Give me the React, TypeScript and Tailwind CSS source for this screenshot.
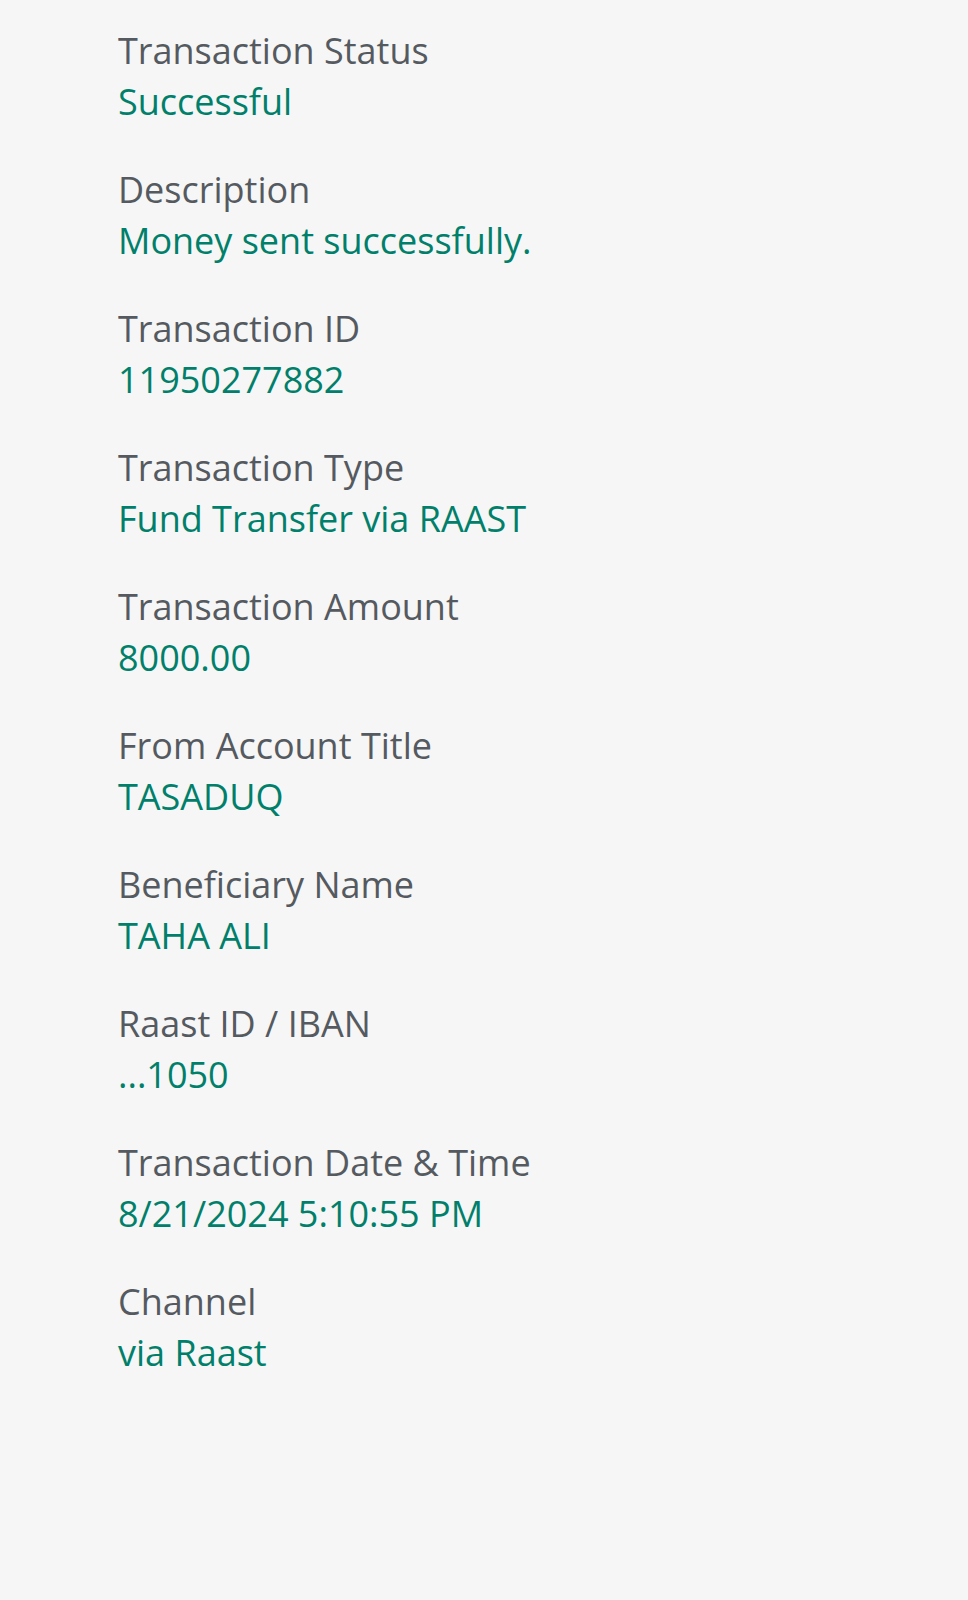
import React from 'react';

const rows: { label: string; value: string }[] = [
  { label: 'Transaction Status', value: 'Successful' },
  { label: 'Description', value: 'Money sent successfully.' },
  { label: 'Transaction ID', value: '11950277882' },
  { label: 'Transaction Type', value: 'Fund Transfer via RAAST' },
  { label: 'Transaction Amount', value: '8000.00' },
  { label: 'From Account Title', value: 'TASADUQ' },
  { label: 'Beneficiary Name', value: 'TAHA ALI' },
  { label: 'Raast ID / IBAN', value: '...1050' },
  { label: 'Transaction Date & Time', value: '8/21/2024 5:10:55 PM' },
  { label: 'Channel', value: 'via Raast' },
];

const App: React.FC = () => {
  return (
    <div
      className="min-h-[1600px] w-full bg-[#f6f6f6] pl-[118px] pt-[27px]"
      style={{ fontFamily: '"Open Sans", "Noto Sans", sans-serif' }}
    >
      <div className="flex flex-col gap-[40px]">
        {rows.map((r) => (
          <div key={r.label} className="flex flex-col gap-[3px]">
            <span className="text-[36px] leading-[48px] text-[#555a60]">{r.label}</span>
            <span className="text-[36px] font-medium leading-[48px] text-[#00806a]">{r.value}</span>
          </div>
        ))}
      </div>
    </div>
  );
};

export default App;
